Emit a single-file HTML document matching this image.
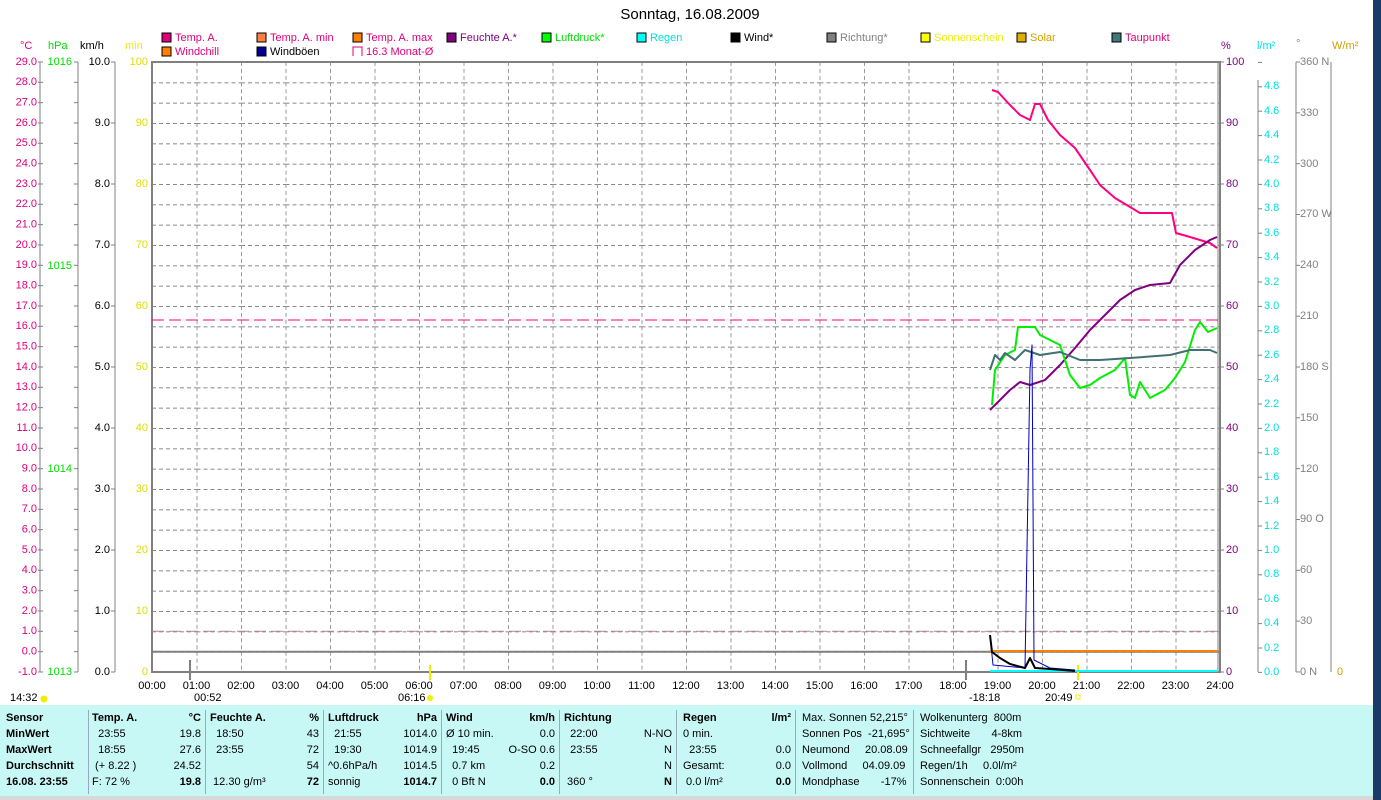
<!DOCTYPE html>
<html><head><meta charset="utf-8"><style>
body{margin:0;width:1381px;height:800px;overflow:hidden;background:#fff;font-family:"Liberation Sans",sans-serif;}
svg text{font-family:"Liberation Sans",sans-serif;font-size:11px;dominant-baseline:middle}
.tb{position:absolute;left:0;top:704px;width:1373px;height:91px;background:#c8f8f6;border-top:1px solid #fff}
.col{position:absolute;top:5px;height:84px;border-right:1px solid #9ab;font-size:11px;color:#000}
.col div{height:16px;line-height:16px;white-space:nowrap;position:relative}
.col span{position:absolute;right:4px}
.b{font-weight:bold}
</style></head><body>
<svg width="1381" height="800" style="position:absolute;left:0;top:0">
<defs>
<pattern id="g" x="152" y="62" width="44.5" height="20.333" patternUnits="userSpaceOnUse">
<line x1="0" y1="0.5" x2="44.5" y2="0.5" stroke="#888" stroke-dasharray="4,3"/>
<line x1="0.5" y1="0" x2="0.5" y2="20.333" stroke="#999" stroke-dasharray="4,3"/>
</pattern>
<pattern id="t1" x="0" y="61.5" width="10" height="20.333" patternUnits="userSpaceOnUse"><line x1="0" y1="0.5" x2="10" y2="0.5" stroke="#808080"/></pattern>
<pattern id="t2" x="0" y="61.5" width="10" height="61" patternUnits="userSpaceOnUse"><line x1="0" y1="0.5" x2="10" y2="0.5" stroke="#808080"/></pattern>
<pattern id="t3" x="0" y="61.9" width="10" height="24.4" patternUnits="userSpaceOnUse"><line x1="0" y1="0.5" x2="10" y2="0.5" stroke="#808080"/></pattern>
<pattern id="t4" x="0" y="61.5" width="10" height="50.83" patternUnits="userSpaceOnUse"><line x1="0" y1="0.5" x2="10" y2="0.5" stroke="#808080"/></pattern>
</defs>
<text x="690" y="15" text-anchor="middle" style="font-size:15px">Sonntag, 16.08.2009</text>
<g style="font-size:11px">
<rect x="162" y="33" width="9" height="9" fill="#e0007a" stroke="#000"/><text x="175" y="38" fill="#e0007a">Temp. A.</text>
<rect x="257" y="33" width="9" height="9" fill="#ff8040" stroke="#000"/><text x="270" y="38" fill="#e0007a">Temp. A. min</text>
<rect x="353" y="33" width="9" height="9" fill="#ff8000" stroke="#000"/><text x="366" y="38" fill="#e0007a">Temp. A. max</text>
<rect x="447" y="33" width="9" height="9" fill="#800080" stroke="#000"/><text x="460" y="38" fill="#800080">Feuchte A.*</text>
<rect x="542" y="33" width="9" height="9" fill="#00ff00" stroke="#000"/><text x="555" y="38" fill="#00dd00">Luftdruck*</text>
<rect x="637" y="33" width="9" height="9" fill="#00ffff" stroke="#000"/><text x="650" y="38" fill="#00e0e0">Regen</text>
<rect x="731" y="33" width="9" height="9" fill="#000" stroke="#000"/><text x="744" y="38" fill="#000">Wind*</text>
<rect x="827" y="33" width="9" height="9" fill="#808080" stroke="#000"/><text x="840" y="38" fill="#808080">Richtung*</text>
<rect x="921" y="33" width="9" height="9" fill="#ffff00" stroke="#000"/><text x="934" y="38" fill="#eeee00">Sonnenschein</text>
<rect x="1017" y="33" width="9" height="9" fill="#e0b000" stroke="#000"/><text x="1030" y="38" fill="#d0a000">Solar</text>
<rect x="1112" y="33" width="9" height="9" fill="#407878" stroke="#000"/><text x="1125" y="38" fill="#e0007a">Taupunkt</text>
<rect x="162" y="47" width="9" height="9" fill="#ff8000" stroke="#000"/><text x="175" y="52" fill="#e0007a">Windchill</text>
<rect x="257" y="47" width="9" height="9" fill="#000090" stroke="#000"/><text x="270" y="52" fill="#000">Windböen</text>
<path d="M353 56V47h9v9" fill="none" stroke="#e0007a"/><text x="366" y="52" fill="#e0007a">16.3 Monat-Ø</text>
</g>
<text x="20" y="46" fill="#e0007a">°C</text><text x="48" y="46" fill="#00dd00">hPa</text><text x="80" y="46" fill="#000">km/h</text><text x="125" y="46" fill="#eeee00">min</text>
<text x="1221" y="46" fill="#800080">%</text><text x="1257" y="46" fill="#00e0e0">l/m²</text><text x="1296" y="44" fill="#888">°</text><text x="1332" y="46" fill="#d0a000">W/m²</text>
<rect x="152" y="62" width="1068" height="610" fill="url(#g)"/>
<rect x="152" y="62" width="1068" height="610" fill="none" stroke="#808080" stroke-width="2"/>
<line x1="1218" y1="62" x2="1218" y2="672" stroke="#808080" stroke-width="1"/>
<line x1="152" y1="651.7" x2="1220" y2="651.7" stroke="#808080" stroke-width="2"/>
<line x1="152" y1="320" x2="1220" y2="320" stroke="#ff0080" stroke-dasharray="12,5"/>
<line x1="152" y1="631.3" x2="1220" y2="631.3" stroke="#c08090" stroke-dasharray="12,5"/>
<g stroke="#808080">
<line x1="40" y1="62" x2="40" y2="672"/><line x1="78" y1="62" x2="78" y2="672"/><line x1="115" y1="62" x2="115" y2="672"/>
<line x1="1258" y1="80" x2="1258" y2="672"/><line x1="1296" y1="62" x2="1296" y2="672"/><line x1="1331" y1="62" x2="1331" y2="672"/>
</g>
<rect x="38" y="61" width="5" height="613" fill="url(#t1)"/>
<rect x="74" y="61" width="4" height="613" fill="url(#t1)"/>
<rect x="111" y="61" width="4" height="613" fill="url(#t2)"/>
<rect x="1220" y="61" width="4" height="613" fill="url(#t2)"/>
<rect x="1258" y="61" width="4" height="613" fill="url(#t3)"/>
<rect x="1296" y="61" width="4" height="613" fill="url(#t4)"/>
<g fill="#e0007a" text-anchor="end">
<text x="37" y="62">29.0</text><text x="37" y="82.3">28.0</text><text x="37" y="102.7">27.0</text><text x="37" y="123">26.0</text><text x="37" y="143.3">25.0</text><text x="37" y="163.7">24.0</text><text x="37" y="184">23.0</text><text x="37" y="204.3">22.0</text><text x="37" y="224.7">21.0</text><text x="37" y="245">20.0</text><text x="37" y="265.3">19.0</text><text x="37" y="285.7">18.0</text><text x="37" y="306">17.0</text><text x="37" y="326.3">16.0</text><text x="37" y="346.7">15.0</text><text x="37" y="367">14.0</text><text x="37" y="387.3">13.0</text><text x="37" y="407.7">12.0</text><text x="37" y="428">11.0</text><text x="37" y="448.3">10.0</text><text x="37" y="468.7">9.0</text><text x="37" y="489">8.0</text><text x="37" y="509.3">7.0</text><text x="37" y="529.7">6.0</text><text x="37" y="550">5.0</text><text x="37" y="570.3">4.0</text><text x="37" y="590.7">3.0</text><text x="37" y="611">2.0</text><text x="37" y="631.3">1.0</text><text x="37" y="651.7">0.0</text><text x="37" y="672">-1.0</text>
</g>
<g fill="#00dd00" text-anchor="end"><text x="72" y="62">1016</text><text x="72" y="266">1015</text><text x="72" y="469">1014</text><text x="72" y="672">1013</text></g>
<g fill="#000" text-anchor="end"><text x="110" y="62">10.0</text><text x="110" y="123">9.0</text><text x="110" y="184">8.0</text><text x="110" y="245">7.0</text><text x="110" y="306">6.0</text><text x="110" y="367">5.0</text><text x="110" y="428">4.0</text><text x="110" y="489">3.0</text><text x="110" y="550">2.0</text><text x="110" y="611">1.0</text><text x="110" y="672">0.0</text></g>
<g fill="#dddd00" text-anchor="end"><text x="148" y="62">100</text><text x="148" y="123">90</text><text x="148" y="184">80</text><text x="148" y="245">70</text><text x="148" y="306">60</text><text x="148" y="367">50</text><text x="148" y="428">40</text><text x="148" y="489">30</text><text x="148" y="550">20</text><text x="148" y="611">10</text><text x="148" y="672">0</text></g>
<g fill="#800080"><text x="1226" y="62">100</text><text x="1226" y="123">90</text><text x="1226" y="184">80</text><text x="1226" y="245">70</text><text x="1226" y="306">60</text><text x="1226" y="367">50</text><text x="1226" y="428">40</text><text x="1226" y="489">30</text><text x="1226" y="550">20</text><text x="1226" y="611">10</text><text x="1226" y="672">0</text></g>
<g fill="#00e0e0"><text x="1264" y="86">4.8</text><text x="1264" y="111">4.6</text><text x="1264" y="135">4.4</text><text x="1264" y="160">4.2</text><text x="1264" y="184">4.0</text><text x="1264" y="208">3.8</text><text x="1264" y="233">3.6</text><text x="1264" y="257">3.4</text><text x="1264" y="282">3.2</text><text x="1264" y="306">3.0</text><text x="1264" y="330">2.8</text><text x="1264" y="355">2.6</text><text x="1264" y="379">2.4</text><text x="1264" y="404">2.2</text><text x="1264" y="428">2.0</text><text x="1264" y="452">1.8</text><text x="1264" y="477">1.6</text><text x="1264" y="501">1.4</text><text x="1264" y="526">1.2</text><text x="1264" y="550">1.0</text><text x="1264" y="574">0.8</text><text x="1264" y="599">0.6</text><text x="1264" y="623">0.4</text><text x="1264" y="648">0.2</text><text x="1264" y="672">0.0</text></g>
<g fill="#808080"><text x="1300" y="62">360 N</text><text x="1300" y="113">330</text><text x="1300" y="164">300</text><text x="1300" y="214">270 W</text><text x="1300" y="265">240</text><text x="1300" y="316">210</text><text x="1300" y="367">180 S</text><text x="1300" y="418">150</text><text x="1300" y="469">120</text><text x="1300" y="519">90  O</text><text x="1300" y="570">60</text><text x="1300" y="621">30</text><text x="1300" y="672">0   N</text></g>
<text x="1337" y="672" fill="#d0a000">0</text>
<g text-anchor="middle" fill="#000">
<text x="152" y="686">00:00</text><text x="196.5" y="686">01:00</text><text x="241" y="686">02:00</text><text x="285.5" y="686">03:00</text><text x="330" y="686">04:00</text><text x="374.5" y="686">05:00</text><text x="419" y="686">06:00</text><text x="463.5" y="686">07:00</text><text x="508" y="686">08:00</text><text x="552.5" y="686">09:00</text><text x="597" y="686">10:00</text><text x="641.5" y="686">11:00</text><text x="686" y="686">12:00</text><text x="730.5" y="686">13:00</text><text x="775" y="686">14:00</text><text x="819.5" y="686">15:00</text><text x="864" y="686">16:00</text><text x="908.5" y="686">17:00</text><text x="953" y="686">18:00</text><text x="997.5" y="686">19:00</text><text x="1042" y="686">20:00</text><text x="1086.5" y="686">21:00</text><text x="1131" y="686">22:00</text><text x="1175.5" y="686">23:00</text><text x="1220" y="686">24:00</text>
</g>
<text x="10" y="698">14:32</text><circle cx="44" cy="699" r="3.5" fill="#eeee00"/>
<text x="194" y="698">00:52</text><text x="398" y="698">06:16</text><circle cx="430" cy="698" r="3" fill="#eeee00"/>
<text x="969" y="698">-18:18</text><text x="1045" y="698">20:49</text><rect x="1076" y="695" width="4" height="4" fill="none" stroke="#ee0"/>
<line x1="190" y1="660" x2="190" y2="680" stroke="#808080" stroke-width="2"/><line x1="966" y1="660" x2="966" y2="680" stroke="#808080" stroke-width="2"/>
<line x1="430" y1="665" x2="430" y2="680" stroke="#ee0" stroke-width="2"/><line x1="1078" y1="665" x2="1078" y2="680" stroke="#ee0" stroke-width="2"/>
<line x1="990" y1="651" x2="1218" y2="651" stroke="#ff8000" stroke-width="2"/>
<line x1="990" y1="671" x2="1218" y2="671" stroke="#00ffff" stroke-width="2"/>
<g fill="none" stroke-width="2" stroke-linejoin="round">
<polyline stroke="#ff0080" points="992,90 998,92 1010,105 1020,115 1030,120 1035,104 1040,104 1048,120 1060,135 1075,148 1090,170 1100,185 1115,198 1130,207 1140,213 1172,213 1176,233 1190,237 1200,240 1210,243 1217,248"/>
<polyline stroke="#800080" points="990,410 1000,400 1010,390 1020,382 1030,385 1045,380 1060,365 1075,348 1090,330 1105,315 1120,300 1135,290 1150,285 1170,283 1180,265 1195,250 1210,240 1217,237"/>
<polyline stroke="#00ee00" points="992,405 995,370 1005,355 1015,350 1018,327 1035,327 1040,335 1060,345 1070,375 1080,388 1090,385 1100,378 1115,370 1125,358 1130,395 1135,398 1140,382 1150,398 1165,390 1175,378 1185,362 1195,330 1200,322 1208,332 1217,328"/>
<polyline stroke="#407070" points="990,370 995,355 1000,360 1005,353 1015,360 1025,350 1040,355 1060,352 1080,360 1100,360 1130,358 1170,355 1190,350 1210,350 1217,353"/>
<polyline stroke="#0000c0" stroke-width="1" points="990,635 993,665 1025,668 1030,370 1032,345 1034,660 1050,668 1075,670"/>
<polyline stroke="#000" points="990,635 992,652 1000,658 1010,664 1025,668 1030,658 1035,668 1050,669 1075,671"/>
</g>
<rect x="1373" y="0" width="8" height="800" fill="#1a3a6a"/>
<rect x="0" y="795" width="1373" height="5" fill="#d8d8d8"/>
</svg>
<div class="tb">
<div class="col" style="left:6px;width:82px"><div class="b">Sensor</div><div class="b">MinWert</div><div class="b">MaxWert</div><div class="b">Durchschnitt</div><div class="b">16.08. 23:55</div></div>
<div class="col" style="left:92px;width:113px"><div class="b">Temp. A.<span>°C</span></div><div>&nbsp; 23:55<span>19.8</span></div><div>&nbsp; 18:55<span>27.6</span></div><div>&nbsp;(+ 8.22 )<span>24.52</span></div><div>F: 72 %<span class="b">19.8</span></div></div>
<div class="col" style="left:210px;width:113px"><div class="b">Feuchte A.<span>%</span></div><div>&nbsp; 18:50<span>43</span></div><div>&nbsp; 23:55<span>72</span></div><div><span>54</span></div><div>&nbsp;12.30 g/m³<span class="b">72</span></div></div>
<div class="col" style="left:328px;width:113px"><div class="b">Luftdruck<span>hPa</span></div><div>&nbsp; 21:55<span>1014.0</span></div><div>&nbsp; 19:30<span>1014.9</span></div><div>^0.6hPa/h<span>1014.5</span></div><div>sonnig<span class="b">1014.7</span></div></div>
<div class="col" style="left:446px;width:113px"><div class="b">Wind<span>km/h</span></div><div>Ø 10 min.<span>0.0</span></div><div>&nbsp; 19:45<span>O-SO 0.6</span></div><div>&nbsp; 0.7 km<span>0.2</span></div><div>&nbsp; 0 Bft N<span class="b">0.0</span></div></div>
<div class="col" style="left:564px;width:112px"><div class="b">Richtung</div><div>&nbsp; 22:00<span>N-NO</span></div><div>&nbsp; 23:55<span>N</span></div><div><span>N</span></div><div>&nbsp;360 °<span class="b">N</span></div></div>
<div class="col" style="left:683px;width:112px"><div class="b">Regen<span>l/m²</span></div><div>0 min.</div><div>&nbsp; 23:55<span>0.0</span></div><div>Gesamt:<span>0.0</span></div><div>&nbsp;0.0 l/m²<span class="b">0.0</span></div></div>
<div class="col" style="left:802px;width:111px"><div>Max. Sonnen 52,215°</div><div>Sonnen Pos &nbsp;-21,695°</div><div>Neumond &nbsp; &nbsp; 20.08.09</div><div>Vollmond &nbsp; &nbsp; 04.09.09</div><div>Mondphase &nbsp; &nbsp; &nbsp; -17%</div></div>
<div class="col" style="left:920px;width:120px;border:none"><div>Wolkenunterg &nbsp;800m</div><div>Sichtweite &nbsp; &nbsp; &nbsp; 4-8km</div><div>Schneefallgr &nbsp; 2950m</div><div>Regen/1h &nbsp; &nbsp; 0.0l/m²</div><div>Sonnenschein &nbsp;0:00h</div></div>
</div>
</body></html>
